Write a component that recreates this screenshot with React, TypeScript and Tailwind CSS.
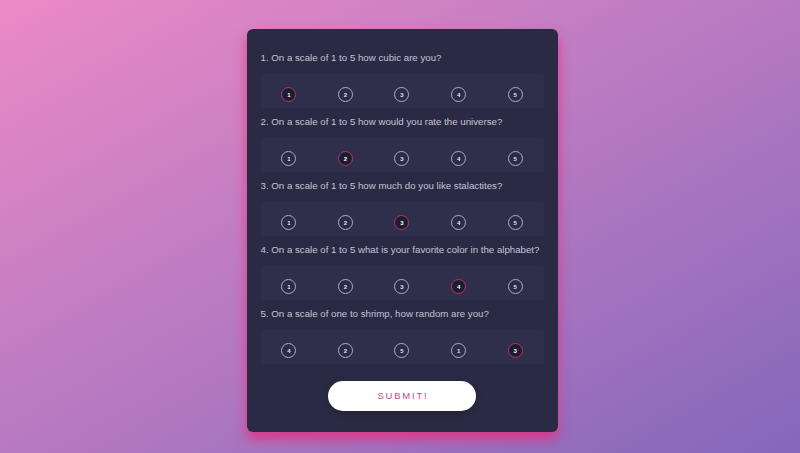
const questions = [
  { text: "1. On a scale of 1 to 5 how cubic are you?", options: [1, 2, 3, 4, 5], picked: 1 },
  { text: "2. On a scale of 1 to 5 how would you rate the universe?", options: [1, 2, 3, 4, 5], picked: 2 },
  { text: "3. On a scale of 1 to 5 how much do you like stalactites?", options: [1, 2, 3, 4, 5], picked: 3 },
  { text: "4. On a scale of 1 to 5 what is your favorite color in the alphabet?", options: [1, 2, 3, 4, 5], picked: 4 },
  { text: "5. On a scale of one to shrimp, how random are you?", options: [4, 2, 5, 1, 3], picked: 3 },
];

function Choice({ n, active }: { n: number; active: boolean }) {
  return (
    <div className="flex-1 flex justify-center">
      <div
        className={
          active
            ? "w-[15px] h-[15px] rounded-full border-[1.5px] border-[#b8336f] bg-[#1d1d30] flex items-center justify-center text-[6px] font-bold text-white leading-none"
            : "w-[15px] h-[15px] rounded-full border-[1.5px] border-[#aeaec2] bg-[#2b2b45] flex items-center justify-center text-[6px] font-bold text-[#e4e4ee] leading-none"
        }
      >
        {n}
      </div>
    </div>
  );
}

export default function App() {
  return (
    <div
      className="w-full h-[453px] flex justify-center items-start pt-[29px] pl-[4px] bg-gradient-to-br from-[#ec8ac6] to-[#8467bb] overflow-hidden"
      style={{ fontFamily: '"Liberation Sans", Arial, sans-serif' }}
    >
      <div className="w-[311px] h-[403px] rounded-[6px] bg-[#2a2a44] px-[14px] pt-[21px] shadow-[0_7px_12px_rgba(226,50,130,0.9)] flex flex-col">
        {questions.map((q) => (
          <div key={q.text} className="mb-[6px]">
            <p className="text-[9.7px] leading-[16px] text-[#c4c4d4] whitespace-nowrap">{q.text}</p>
            <div className="mt-[8px] h-[34px] rounded-[3px] bg-[#2f2f4b] flex items-start pt-[13px]">
              {q.options.map((n) => (
                <Choice key={n} n={n} active={n === q.picked} />
              ))}
            </div>
          </div>
        ))}
        <div className="flex justify-center mt-[11px]">
          <button className="w-[148px] h-[30px] rounded-full bg-white text-[9.5px] tracking-[1.8px] text-[#c54a88] pl-[2px] shadow-[0_2px_6px_rgba(0,0,0,0.25)]">
            SUBMIT!
          </button>
        </div>
      </div>
    </div>
  );
}
